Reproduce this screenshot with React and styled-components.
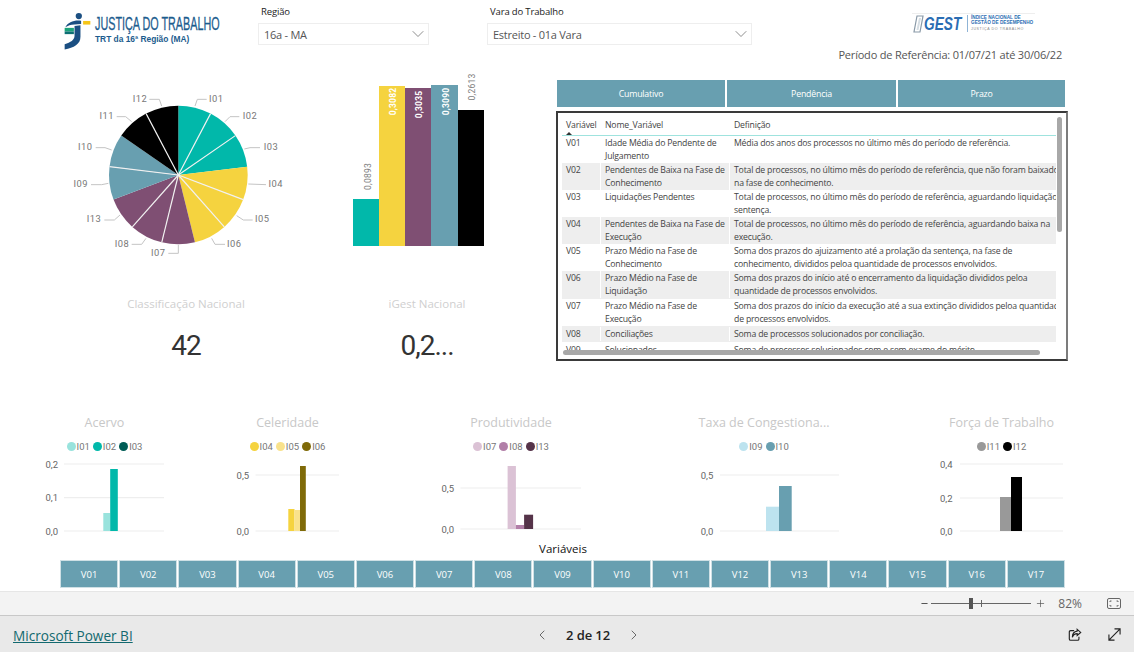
import React from 'react';
import styled, { createGlobalStyle } from 'styled-components';
import { ChevronDown, ChevronLeft, ChevronRight, Minus, Plus } from 'lucide-react';

const UI = `"Open Sans", "Noto Sans", sans-serif`;
const DIN = `Roboto, sans-serif`;
const STEEL = '#689fb0';

const GlobalStyle = createGlobalStyle`
  html, body { margin: 0; height: 100%; overflow: hidden; background: #fff; }
  #root { height: 100%; }
  * { box-sizing: border-box; }
`;

const Page = styled.div`
  width: 1134px;
  height: 652px;
  display: flex;
  flex-direction: column;
  font-family: ${UI};
`;

const Canvas = styled.main`
  height: 591px;
  display: flex;
  flex-direction: column;
`;

const Header = styled.header`
  height: 68px;
  padding-left: 64px;
  display: grid;
  grid-template-columns: 194px 229px 343px 1fr;
`;

const LogoBlock = styled.div`
  display: flex;
  align-items: flex-start;
  gap: 4px;
  padding-top: 12px;
  svg { flex-shrink: 0; }
`;

const LogoText = styled.div`
  color: #1c5c8e;
  padding-top: 4px;
  min-width: 0;
`;

const LogoTitle = styled.div`
  font-family: "Liberation Sans", sans-serif;
  font-size: 18px;
  line-height: 17px;
  white-space: nowrap;
  -webkit-text-stroke: 0.3px #1c5c8e;
  transform: scaleX(0.6);
  transform-origin: left center;
`;

const LogoSub = styled.div`
  font-family: "Liberation Sans", sans-serif;
  font-weight: 700;
  font-size: 8.4px;
  line-height: 13px;
  white-space: nowrap;
`;

const Filter = styled.div`
  padding-top: 5px;
`;

const FilterLabel = styled.div`
  font-size: 9.5px;
  line-height: 14px;
  letter-spacing: -0.15px;
  color: #222;
  padding-left: 3px;
  margin-bottom: 4px;
`;

const Select = styled.div`
  width: ${p => p.$width}px;
  height: 22px;
  border: 1px solid #eee;
  padding: 0 0 0 5px;
  display: flex;
  align-items: center;
  justify-content: space-between;
  font-size: 11px;
  letter-spacing: -0.25px;
  color: #555;
  svg { color: #777; }
`;

const RefColumn = styled.div`
  display: flex;
  flex-direction: column;
  align-items: flex-end;
  padding: 13px 72px 0 0;
`;

const GestLogo = styled.div`
  width: 123px;
  height: 20px;
  margin-right: 27px;
  padding-left: 1px;
  border-top: 1px solid #eee;
  display: flex;
  align-items: center;
  color: #2a6db3;
  svg { flex-shrink: 0; }
`;

const GestWord = styled.span`
  width: 40px;
  font-family: "Liberation Sans", sans-serif;
  font-weight: 700;
  font-style: italic;
  font-size: 18px;
  line-height: 18px;
  transform: scaleX(0.76);
  transform-origin: left center;
`;

const GestText = styled.div`
  border-left: 1px solid #8fb4d6;
  padding-left: 3px;
  margin-left: 3px;
  font-family: "Liberation Sans", sans-serif;
  font-weight: 700;
  font-size: 4.7px;
  line-height: 5.5px;
  white-space: nowrap;
`;

const GestFoot = styled.span`
  font-weight: 400;
  font-size: 3.6px;
  letter-spacing: 0.6px;
  color: #888;
`;

const RefText = styled.div`
  margin-top: 12px;
  font-size: 11px;
  letter-spacing: -0.2px;
  line-height: 20px;
  color: #555;
  white-space: nowrap;
`;

const Middle = styled.section`
  height: 344px;
  padding-left: 60px;
  display: grid;
  grid-template-columns: 280px 216px 512px;
  align-content: start;
`;

const LeftColumn = styled.div`
  padding-top: ${p => p.$top}px;
  display: flex;
  flex-direction: column;
`;

const Kpi = styled.div`
  width: ${p => p.$width}px;
  margin-top: ${p => p.$gap}px;
  text-align: center;
`;

const KpiLabel = styled.div`
  font-size: 11.5px;
  line-height: 20px;
  color: #cfcfcf;
  white-space: nowrap;
`;

const KpiValue = styled.div`
  font-family: Roboto, sans-serif;
  font-size: 28px;
  letter-spacing: -1px;
  line-height: 40px;
  margin-top: 12px;
  color: #333;
`;

const RightColumn = styled.div`
  padding-top: 12px;
`;

const Tabs = styled.div`
  margin-left: 1px;
  width: 508px;
  height: 27px;
  display: grid;
  grid-template-columns: 168px 169px 1fr;
  gap: 2px;
`;

const Tab = styled.div`
  background: ${STEEL};
  color: #fff;
  font-size: 8.8px;
  letter-spacing: -0.2px;
  display: flex;
  align-items: center;
  justify-content: center;
`;

const TableFrame = styled.div`
  position: relative;
  width: 512px;
  height: 250px;
  margin-top: 4px;
  padding: 0 10px 9px 4px;
  border: 2px solid #3a3a3a;
  border-right-color: #7c7c7c;
`;

const TableClip = styled.div`
  height: 100%;
  overflow: hidden;
`;

const TableRow = styled.div`
  display: grid;
  grid-template-columns: 38px 129px 1fr;
  font-size: 8.7px;
  letter-spacing: -0.19px;
  line-height: 13px;
  color: #444;
  white-space: nowrap;
  padding: ${p => (p.$single ? '1px 0' : '0 0 0.1px')};
  background: ${p => (p.$shaded ? '#eee' : '#fff')};
`;

const HeadRow = styled(TableRow)`
  position: relative;
  height: 23px;
  padding-top: 3px;
  align-items: center;
  border-bottom: 1px solid #9fe3de;
`;

const Cell = styled.div`
  padding: 1px 0 0 4px;
  border-left: ${p => (p.$first ? 'none' : '1px solid #fff')};
  overflow: hidden;
`;

const SortMark = styled.span`
  position: absolute;
  left: 4px;
  bottom: 0;
  border-left: 3px solid transparent;
  border-right: 3px solid transparent;
  border-bottom: 3px solid #333;
`;

const ScrollY = styled.div`
  position: absolute;
  top: 4px;
  right: 4px;
  width: 5px;
  height: 115px;
  border-radius: 3px;
  background: #a8a8a8;
`;

const ScrollX = styled.div`
  position: absolute;
  left: 5px;
  bottom: 4px;
  width: 477px;
  height: 5px;
  border-radius: 3px;
  background: #a8a8a8;
`;

const ChartsRow = styled.section`
  height: 128px;
  padding-left: 44px;
  display: grid;
  grid-template-columns: 191px 205px 249px 249px 1fr;
`;

const SmallChart = styled.div`
  width: ${p => p.$width}px;
  display: flex;
  flex-direction: column;
  align-items: center;
`;

const ChartTitle = styled.div`
  font-size: 12.5px;
  line-height: 22px;
  color: #c8c8c8;
  white-space: nowrap;
`;

const Legend = styled.div`
  height: 18px;
  margin-top: 3px;
  display: flex;
  align-items: center;
  gap: 3px;
`;

const LegendItem = styled.span`
  display: flex;
  align-items: center;
  gap: 1px;
  font-family: ${DIN};
  font-size: 9.5px;
  color: #777;
`;

const Dot = styled.i`
  width: 9px;
  height: 9px;
  border-radius: 50%;
  background: ${p => p.$color};
`;

const AxisName = styled.div`
  height: 20px;
  padding-right: 8px;
  text-align: center;
  font-size: 11.5px;
  line-height: 18px;
  color: #111;
`;

const Slicer = styled.div`
  margin-left: 60px;
  width: 1005px;
  height: 28px;
  display: grid;
  grid-template-columns: repeat(17, 1fr);
  gap: 1px;
`;

const SlicerCell = styled.div`
  background: ${STEEL};
  border: 1px solid #cfe0e5;
  color: #fff;
  font-size: 9.5px;
  display: flex;
  align-items: center;
  justify-content: center;
`;

const ZoomBar = styled.div`
  height: 24px;
  background: #f3f3f3;
  border-top: 1px solid #e6e6e6;
  display: flex;
  align-items: center;
  justify-content: flex-end;
  padding-right: 13px;
  color: #555;
`;

const Track = styled.div`
  position: relative;
  width: 100px;
  height: 1px;
  margin: 0 4px 0 2px;
  background: #666;
`;

const Thumb = styled.span`
  position: absolute;
  left: 38px;
  top: -5px;
  width: 4px;
  height: 11px;
  background: #555;
`;

const Tick = styled.span`
  position: absolute;
  left: 50px;
  top: -3px;
  width: 1px;
  height: 7px;
  background: #666;
`;

const ZoomValue = styled.span`
  margin: 0 25px 0 12px;
  font-size: 12px;
  color: #666;
`;

const Footer = styled.footer`
  height: 37px;
  background: #e9e9e9;
  border-top: 1px solid #c8c8c8;
  display: grid;
  grid-template-columns: 505px 140px 1fr;
  align-items: center;
  padding: 2px 13px 0 13px;
`;

const BrandLink = styled.a`
  font-size: 13.6px;
  color: #13696f;
  text-decoration: underline;
  white-space: nowrap;
`;

const Pager = styled.div`
  display: flex;
  align-items: center;
  justify-content: center;
  gap: 16px;
  font-size: 13px;
  letter-spacing: -0.1px;
  font-weight: 600;
  color: #222;
  white-space: nowrap;
  svg { color: #555; flex-shrink: 0; }
`;

const FooterIcons = styled.div`
  display: flex;
  justify-content: flex-end;
  gap: 26px;
`;

// pie drawn at 3x, 13 equal slices going clockwise from the top
const pieSlices = [
  { name: 'I01', color: '#01b8aa', text: [469, 55], leader: '405,78 412,58 440,58', line: true },
  { name: 'I02', color: '#01b8aa', text: [570, 107], leader: '495,125 510,110 538,110', line: true },
  { name: 'I03', color: '#01b8aa', text: [633, 200], leader: '553,207 570,203 600,203' },
  { name: 'I04', color: '#f5d33f', text: [647, 312], leader: '565,312 618,314', line: true },
  { name: 'I05', color: '#f5d33f', text: [607, 416], leader: '530,407 550,420 578,420', line: true },
  { name: 'I06', color: '#f5d33f', text: [523, 491], leader: '455,475 465,493 495,493' },
  { name: 'I07', color: '#7f4f73', text: [295, 517], leader: '355,495 355,520 325,520', line: true },
  { name: 'I08', color: '#7f4f73', text: [186, 491], leader: '258,475 245,493 215,493', line: true },
  { name: 'I13', color: '#7f4f73', text: [102, 416], leader: '180,405 163,420 133,420' },
  { name: 'I09', color: STEEL, text: [62, 312], leader: '145,310 125,314 93,314', line: true },
  { name: 'I10', color: STEEL, text: [76, 200], leader: '155,210 135,203 107,203' },
  { name: 'I11', color: '#000', text: [140, 107], leader: '215,125 197,110 170,110', line: true },
  { name: 'I12', color: '#000', text: [240, 55], leader: '305,78 298,58 268,58' },
];

const polar = (i, r) => {
  const a = (i * 2 * Math.PI) / 13;
  return [355 + r * Math.sin(a), 285 - r * Math.cos(a)];
};

function PieChart() {
  return (
    <svg width="230" height="190" viewBox="0 0 690 570">
      {pieSlices.map((s, i) => {
        const [x1, y1] = polar(i, 208);
        const [x2, y2] = polar(i + 1, 208);
        return <path key={s.name} fill={s.color} d={`M355 285 L${x1} ${y1} A208 208 0 0 1 ${x2} ${y2} Z`} />;
      })}
      {pieSlices.map((s, i) => {
        if (!s.line) return null;
        const [x, y] = polar(i + 1, 208);
        return <line key={s.name} x1="355" y1="285" x2={x} y2={y} stroke="#f1f1f1" strokeWidth="3.5" />;
      })}
      {pieSlices.map(s => (
        <g key={s.name}>
          <polyline points={s.leader} fill="none" stroke="#c4c4c4" strokeWidth="3" />
          <text x={s.text[0]} y={s.text[1] + 10} textAnchor="middle" fontFamily={DIN} fontSize="28" letterSpacing="1.5" fill="#777">{s.name}</text>
        </g>
      ))}
    </svg>
  );
}

const columns = [
  { x: 13, w: 26, top: 129, label: '0,0893', lx: 27, ly: 106.5, fill: '#01b8aa', ink: '#808080' },
  { x: 39, w: 26, top: 16, label: '0,3082', lx: 52.7, ly: 31.5, fill: '#f5d33f', ink: '#fff' },
  { x: 65, w: 26, top: 18, label: '0,3035', lx: 78.7, ly: 34.5, fill: '#7f4f73', ink: '#fff' },
  { x: 91, w: 27, top: 15, label: '0,3090', lx: 105, ly: 31.5, fill: STEEL, ink: '#fff' },
  { x: 118, w: 26, top: 40, label: '0,2613', lx: 131, ly: 17, fill: '#000', ink: '#808080' },
];

function ColumnChart() {
  return (
    <svg width="160" height="190" viewBox="0 0 160 190">
      {columns.map(c => (
        <g key={c.label}>
          <rect x={c.x} y={c.top} width={c.w} height={176 - c.top} fill={c.fill} />
          <text
            transform={`translate(${c.lx + 3.5} ${c.ly}) rotate(-90)`}
            textAnchor="middle"
            fontFamily={DIN}
            fontSize="8.5"
            letterSpacing="0.2"
            fontWeight={c.ink === '#fff' ? 700 : 400}
            fill={c.ink}
          >
            {c.label}
          </text>
        </g>
      ))}
    </svg>
  );
}

const smallCharts = [
  {
    title: 'Acervo', left: 44, width: 121, tickX: 45.5, x1: 64, x2: 164,
    legend: [['I01', '#99e3dd'], ['I02', '#01b8aa'], ['I03', '#005c55']],
    ticks: [['0,2', 464], ['0,1', 497.7], ['0,0', 531]],
    bars: [[103.3, 110.2, 513, '#99e3dd'], [110.2, 117.8, 469, '#01b8aa']],
  },
  {
    title: 'Celeridade', left: 235, width: 105, tickX: 236.6, x1: 255.5, x2: 339,
    legend: [['I04', '#f5d33f'], ['I05', '#f9e28c'], ['I06', '#7f6a08']],
    ticks: [['0,5', 475], ['0,0', 531]],
    bars: [[288.3, 294.5, 509, '#f5d33f'], [294.5, 300, 510, '#f9e28c'], [300, 305.8, 466, '#7f6a08']],
  },
  {
    title: 'Produtividade', left: 440, width: 142, tickX: 441.5, x1: 460.4, x2: 581,
    legend: [['I07', '#dbc2d5'], ['I08', '#b27fa8'], ['I13', '#553349']],
    ticks: [['0,5', 488], ['0,0', 529]],
    bars: [[507.6, 515.9, 466, '#dbc2d5'], [515.9, 524.1, 525, '#b27fa8'], [524.1, 533.1, 514.7, '#553349']],
  },
  {
    title: 'Taxa de Congestiona...', left: 689, width: 150, tickX: 700.7, x1: 720, x2: 839,
    legend: [['I09', '#bde3ef'], ['I10', STEEL]],
    ticks: [['0,5', 475], ['0,0', 531]],
    bars: [[766, 779, 506.7, '#bde3ef'], [779, 791.7, 486, STEEL]],
  },
  {
    title: 'Força de Trabalho', left: 938, width: 127, tickX: 940, x1: 960, x2: 1063,
    legend: [['I11', '#999'], ['I12', '#000']],
    ticks: [['0,4', 464], ['0,2', 498], ['0,0', 531]],
    bars: [[1000, 1011, 497, '#999'], [1011, 1022, 477, '#000']],
  },
];

function SmallPlot({ chart }) {
  const base = chart.ticks[chart.ticks.length - 1][1];
  return (
    <svg width={chart.width} height="85" viewBox={`${chart.left} 455 ${chart.width} 85`}>
      {chart.ticks.map(([label, y]) => (
        <g key={label}>
          <line x1={chart.x1} x2={chart.x2} y1={y} y2={y} stroke="#eee" strokeWidth="1.2" />
          <text x={chart.tickX} y={y + 3.5} fontFamily={DIN} fontSize="9.5" fill="#666">{label}</text>
        </g>
      ))}
      {chart.bars.map(([x1, x2, top, fill]) => (
        <rect key={x1} x={x1} y={top} width={x2 - x1} height={base - top} fill={fill} />
      ))}
    </svg>
  );
}

const rows = [
  ['V01', ['Idade Média do Pendente de', 'Julgamento'], ['Média dos anos dos processos no último mês do período de referência.']],
  ['V02', ['Pendentes de Baixa na Fase de', 'Conhecimento'], ['Total de processos, no último mês do período de referência, que não foram baixados', 'na fase de conhecimento.']],
  ['V03', ['Liquidações Pendentes'], ['Total de processos, no último mês do período de referência, aguardando liquidação', 'sentença.']],
  ['V04', ['Pendentes de Baixa na Fase de', 'Execução'], ['Total de processos, no último mês do período de referência, aguardando baixa na', 'execução.']],
  ['V05', ['Prazo Médio na Fase de', 'Conhecimento'], ['Soma dos prazos do ajuizamento até a prolação da sentença, na fase de', 'conhecimento, divididos peloa quantidade de processos envolvidos.']],
  ['V06', ['Prazo Médio na Fase de', 'Liquidação'], ['Soma dos prazos do início até o encerramento da liquidação divididos peloa', 'quantidade de processos envolvidos.']],
  ['V07', ['Prazo Médio na Fase de', 'Execução'], ['Soma dos prazos do início da execução até a sua extinção divididos peloa quantidade', 'de processos envolvidos.']],
  ['V08', ['Conciliações'], ['Soma de processos solucionados por conciliação.']],
  ['V09', ['Solucionados'], ['Soma de processos solucionados com e sem exame do mérito.']],
];

const lines = list => list.map((text, i) => <div key={i}>{text}</div>);

function JusticaMark() {
  return (
    <svg width="27" height="38" viewBox="40 20 82 115">
      <circle cx="85" cy="32" r="9.5" fill="#1b4f82" />
      <path fill="#1b4f82" d="M44 66 C52 50 72 43 92 46 L92 56 L72 58 C60 58 52 62 44 66 Z" />
      <path fill="#1b4f82" d="M72 62 L90 60 L90 95 C90 118 70 128 42 134 L42 118 C60 112 72 105 72 92 Z" />
      <rect x="98" y="47" width="22" height="11" fill="#f5c518" />
      <rect x="42" y="68" width="28" height="11" fill="#1ba37a" />
      <rect x="42" y="79" width="28" height="8" fill="#0d6f73" />
    </svg>
  );
}

function GestMark() {
  return (
    <svg width="11" height="18" viewBox="0 0 11 18">
      <path d="M4 1 H10 L7 17 H1 Z" fill="none" stroke="#8a9aa8" strokeWidth="1.2" />
      <path d="M6 3 H8 L5.5 15 H3.5 Z" fill="#d5dde3" />
    </svg>
  );
}

function ShareIcon() {
  return (
    <svg width="14" height="14" viewBox="0 0 16 16" fill="none" stroke="#222" strokeWidth="1.3">
      <path d="M7 3 H3 C2 3 1.5 3.5 1.5 4.5 V12.5 C1.5 13.5 2 14 3 14 H11 C12 14 12.5 13.5 12.5 12.5 V10" />
      <path d="M10.5 1.5 L14.5 5 L10.5 8.5 V6.5 C7.5 6.5 6 8 5 10.5 C5 7 7 4 10.5 3.5 Z" />
    </svg>
  );
}

function ExpandIcon() {
  return (
    <svg width="13" height="13" viewBox="0 0 14 14" fill="none" stroke="#222" strokeWidth="1.2">
      <path d="M1 13 L13 1 M7 1 H13 V7 M1 7 V13 H7" />
    </svg>
  );
}

function FitIcon() {
  return (
    <svg width="14" height="11" viewBox="0 0 14 11" fill="none" stroke="#666" strokeWidth="1">
      <rect x="0.5" y="0.5" width="13" height="10" rx="1.5" />
      <path d="M3 4 V3 H4.5 M9.5 3 H11 V4 M11 7 V8 H9.5 M4.5 8 H3 V7" />
    </svg>
  );
}

export default function App() {
  const variables = Array.from({ length: 17 }, (_, i) => `V${String(i + 1).padStart(2, '0')}`);

  return (
    <Page>
      <GlobalStyle />
      <Canvas>
        <Header>
          <LogoBlock>
            <JusticaMark />
            <LogoText>
              <LogoTitle>JUSTIÇA DO TRABALHO</LogoTitle>
              <LogoSub>TRT da 16ª Região (MA)</LogoSub>
            </LogoText>
          </LogoBlock>
          <Filter>
            <FilterLabel>Região</FilterLabel>
            <Select $width={171}>16a - MA <ChevronDown size={20} strokeWidth={1} /></Select>
          </Filter>
          <Filter>
            <FilterLabel>Vara do Trabalho</FilterLabel>
            <Select $width={265}>Estreito - 01a Vara <ChevronDown size={20} strokeWidth={1} /></Select>
          </Filter>
          <RefColumn>
            <GestLogo>
              <GestMark />
              <GestWord>GEST</GestWord>
              <GestText>
                ÍNDICE NACIONAL DE<br />
                GESTÃO DE DESEMPENHO<br />
                <GestFoot>JUSTIÇA DO TRABALHO</GestFoot>
              </GestText>
            </GestLogo>
            <RefText>Período de Referência: 01/07/21 até 30/06/22</RefText>
          </RefColumn>
        </Header>

        <Middle>
          <LeftColumn $top={12}>
            <PieChart />
            <Kpi $width={252} $gap={24}>
              <KpiLabel>Classificação Nacional</KpiLabel>
              <KpiValue>42</KpiValue>
            </Kpi>
          </LeftColumn>
          <LeftColumn $top={2}>
            <ColumnChart />
            <Kpi $width={174} $gap={34}>
              <KpiLabel>iGest Nacional</KpiLabel>
              <KpiValue>0,2...</KpiValue>
            </Kpi>
          </LeftColumn>
          <RightColumn>
            <Tabs>
              <Tab>Cumulativo</Tab>
              <Tab>Pendência</Tab>
              <Tab>Prazo</Tab>
            </Tabs>
            <TableFrame>
              <TableClip>
                <HeadRow>
                  <Cell $first>Variável</Cell>
                  <Cell>Nome_Variável</Cell>
                  <Cell>Definição</Cell>
                  <SortMark />
                </HeadRow>
                {rows.map(([code, name, definition], i) => (
                  <TableRow key={code} $shaded={i % 2 === 1} $single={name.length === 1 && definition.length === 1}>
                    <Cell $first>{code}</Cell>
                    <Cell>{lines(name)}</Cell>
                    <Cell>{lines(definition)}</Cell>
                  </TableRow>
                ))}
              </TableClip>
              <ScrollY />
              <ScrollX />
            </TableFrame>
          </RightColumn>
        </Middle>

        <ChartsRow>
          {smallCharts.map(chart => (
            <SmallChart key={chart.title} $width={chart.width}>
              <ChartTitle>{chart.title}</ChartTitle>
              <Legend>
                {chart.legend.map(([name, color]) => (
                  <LegendItem key={name}><Dot $color={color} />{name}</LegendItem>
                ))}
              </Legend>
              <SmallPlot chart={chart} />
            </SmallChart>
          ))}
        </ChartsRow>

        <AxisName>Variáveis</AxisName>
        <Slicer>
          {variables.map(v => <SlicerCell key={v}>{v}</SlicerCell>)}
        </Slicer>
      </Canvas>

      <ZoomBar>
        <Minus size={9} strokeWidth={3} />
        <Track><Thumb /><Tick /></Track>
        <Plus size={11} strokeWidth={1.5} />
        <ZoomValue>82%</ZoomValue>
        <FitIcon />
      </ZoomBar>

      <Footer>
        <BrandLink>Microsoft Power BI</BrandLink>
        <Pager>
          <ChevronLeft size={16} strokeWidth={1.3} />
          2 de 12
          <ChevronRight size={16} strokeWidth={1.3} />
        </Pager>
        <FooterIcons>
          <ShareIcon />
          <ExpandIcon />
        </FooterIcons>
      </Footer>
    </Page>
  );
}
